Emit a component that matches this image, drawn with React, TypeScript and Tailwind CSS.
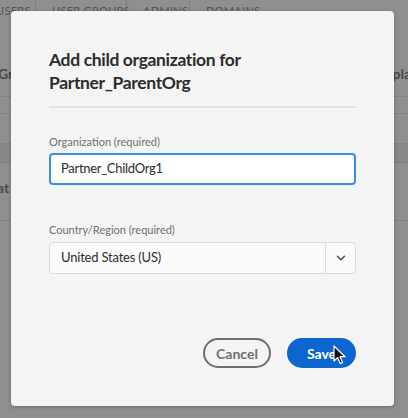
import { ChevronDown } from "lucide-react";

const font = { fontFamily: "Lato, 'Open Sans', sans-serif" };

const Tabs = () => (
  <div className="flex items-start h-[28px] text-[11px] tracking-[0.3px] text-[#555] uppercase whitespace-nowrap">
    <div className="w-[40px] -ml-[4px] pt-[3px] border-r border-[#7e7e7e] h-[22px]">Users</div>
    <div className="w-[91px] pl-[16px] pt-[3px] border-r border-[#7e7e7e] h-[22px]">User Groups</div>
    <div className="w-[63px] pl-[16px] pt-[3px] border-r border-[#7e7e7e] h-[22px]">Admins</div>
    <div className="pl-[16px] pt-[3px]">Domains</div>
  </div>
);

const Backdrop = () => (
  <div className="flex flex-col w-full h-full" style={font}>
    <Tabs />
    <div className="flex justify-between h-[68px] items-center pt-[22px] text-[14px] font-bold text-[#4a4a4a]">
      <span className="-ml-[2px]">Gro</span>
      <span className="-mr-[3px]">pla</span>
    </div>
    <div className="h-[17px] border-t border-[#808080]" />
    <div className="h-[30px] border-t border-[#808080]" />
    <div className="h-[19px] border-t border-[#808080] bg-[#888]" />
    <div className="h-[58px] border-t border-[#808080] flex items-center text-[14px] font-bold text-[#4a4a4a]">
      <span className="-ml-[3px] -mt-[8px]">at :</span>
    </div>
    <div className="flex-1 border-t border-[#808080]" />
  </div>
);

const Cursor = () => (
  <svg className="absolute left-[333px] top-[345px]" width="14" height="20" viewBox="0 0 14 20">
    <path d="M1 1 L1 16 L4.6 12.6 L7.2 18.6 L9.6 17.6 L7 11.7 L12 11.7 Z" fill="#111" stroke="#fff" strokeWidth="1.2" strokeLinejoin="round" />
  </svg>
);

export default function App() {
  return (
    <div className="relative w-[408px] h-[418px] overflow-hidden bg-[#8f8f8f]">
      <Backdrop />
      <div
        className="absolute left-[11px] top-[11px] w-[383px] h-[395px] rounded-[4px] bg-[#f4f4f4] shadow-[0_1px_4px_rgba(0,0,0,0.25)] flex flex-col pl-[38px] pr-[38px] pt-[37px] pb-[38px]"
        style={font}
      >
        <h2 className="text-[17.5px] leading-[23px] tracking-[-0.35px] font-bold text-[#2c2c2c]">
          Add child organization for
          <br />
          Partner_ParentOrg
        </h2>
        <div className="mt-[12px] h-[2px] bg-[#e1e1e1]" />
        <label className="mt-[26px] text-[11px] leading-[16px] text-[#6e6e6e]">Organization (required)</label>
        <div className="mt-[3px] h-[32px] rounded-[4px] border-2 border-[#378ef0] bg-white flex items-center pl-[10px] text-[13px] tracking-[-0.3px] text-[#2c2c2c]">
          Partner_ChildOrg1
        </div>
        <label className="mt-[37px] text-[11px] leading-[16px] text-[#6e6e6e]">Country/Region (required)</label>
        <div className="mt-[4px] h-[32px] rounded-[4px] border border-[#dadada] bg-[#fafafa] flex items-stretch text-[13px] tracking-[-0.2px] text-[#2c2c2c]">
          <div className="flex-1 flex items-center pl-[11px]">United States (US)</div>
          <div className="w-[30px] border-l border-[#dadada] flex items-center justify-center">
            <ChevronDown size={14} strokeWidth={2.5} className="text-[#4b4b4b]" />
          </div>
        </div>
        <div className="mt-auto flex justify-end gap-[16px]">
          <button className="h-[30px] w-[68px] rounded-full border-2 border-[#6e6e6e] text-[14px] font-bold text-[#6e6e6e]">
            Cancel
          </button>
          <button className="h-[30px] w-[69px] rounded-full bg-[#0d66d0] text-[14px] font-bold text-white">
            Save
          </button>
        </div>
      </div>
      <Cursor />
    </div>
  );
}
